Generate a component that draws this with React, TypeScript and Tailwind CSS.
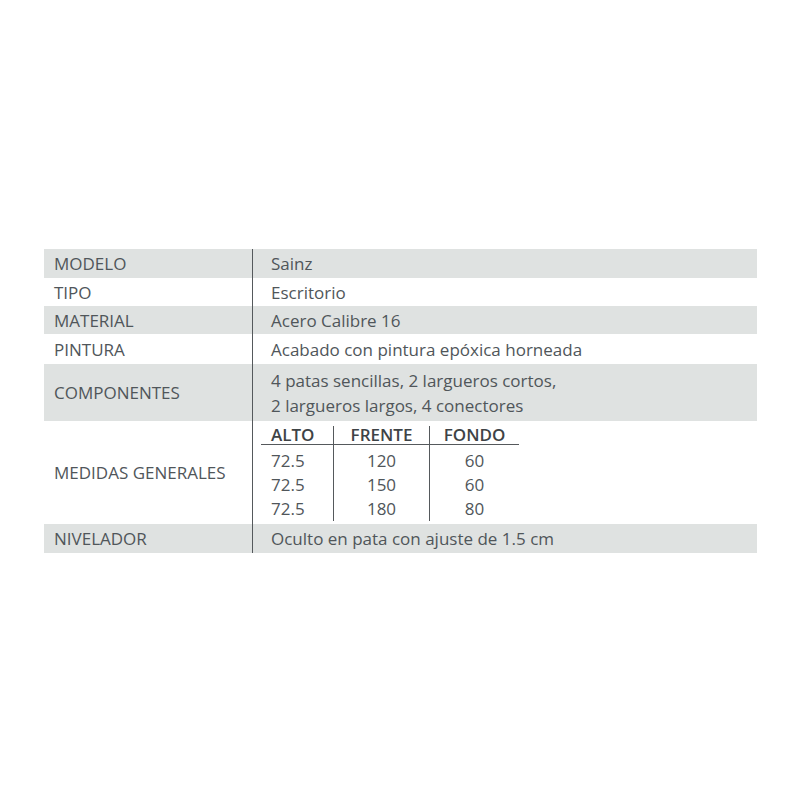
const rows: { label: string; value: string; gray: boolean; h: string }[] = [
  { label: 'MODELO', value: 'Sainz', gray: true, h: 'h-[29px]' },
  { label: 'TIPO', value: 'Escritorio', gray: false, h: 'h-[28px]' },
  { label: 'MATERIAL', value: 'Acero Calibre 16', gray: true, h: 'h-[28px]' },
  { label: 'PINTURA', value: 'Acabado con pintura epóxica horneada', gray: false, h: 'h-[30px]' },
];

const medidas = [
  ['72.5', '120', '60'],
  ['72.5', '150', '60'],
  ['72.5', '180', '80'],
];

function Row({ label, gray, h, children }: { label: string; gray: boolean; h: string; children: React.ReactNode }) {
  return (
    <div className={`flex ${h} ${gray ? 'bg-[#dfe2e1]' : 'bg-white'}`}>
      <div className="w-[209px] flex items-center pl-[10px] border-r border-[#55595c]">{label}</div>
      <div className="flex-1 flex flex-col justify-center pl-[18px]">{children}</div>
    </div>
  );
}

export default function App() {
  return (
    <div className="w-[800px] h-[800px] bg-white pt-[249px] pl-[44px] text-[17px] text-[#50565a] leading-[25px]" style={{ fontFamily: '"Open Sans", "Noto Sans", sans-serif' }}>
      <div className="w-[713px] flex flex-col">
        {rows.map((r) => (
          <Row key={r.label} label={r.label} gray={r.gray} h={r.h}>
            {r.value}
          </Row>
        ))}
        <Row label="COMPONENTES" gray h="h-[57px]">
          <div>4 patas sencillas, 2 largueros cortos,</div>
          <div>2 largueros largos, 4 conectores</div>
        </Row>
        <div className="flex h-[103px] bg-white">
          <div className="w-[209px] flex items-center pl-[10px] border-r border-[#55595c]">MEDIDAS GENERALES</div>
          <div className="flex-1 pl-[8px] pt-[5px]">
            <div className="w-[258px] grid grid-cols-[72px_96px_90px]">
              <div className="font-semibold text-[#3e4346] leading-[17px] pl-[10px] border-b border-[#55595c] pb-[1px]">ALTO</div>
              <div className="font-semibold text-[#3e4346] leading-[17px] text-center border-b border-l border-[#55595c] pb-[1px]">FRENTE</div>
              <div className="font-semibold text-[#3e4346] leading-[17px] text-center border-b border-l border-[#55595c] pb-[1px]">FONDO</div>
              {medidas.map((m, i) => (
                <div key={i} className="contents">
                  <div className={`pl-[10px] leading-[24px] ${i === 0 ? 'pt-[4px]' : ''}`}>{m[0]}</div>
                  <div className={`text-center border-l border-[#55595c] leading-[24px] ${i === 0 ? 'pt-[4px]' : ''}`}>{m[1]}</div>
                  <div className={`text-center border-l border-[#55595c] leading-[24px] ${i === 0 ? 'pt-[4px]' : ''}`}>{m[2]}</div>
                </div>
              ))}
            </div>
          </div>
        </div>
        <Row label="NIVELADOR" gray h="h-[29px]">
          Oculto en pata con ajuste de 1.5 cm
        </Row>
      </div>
    </div>
  );
}
